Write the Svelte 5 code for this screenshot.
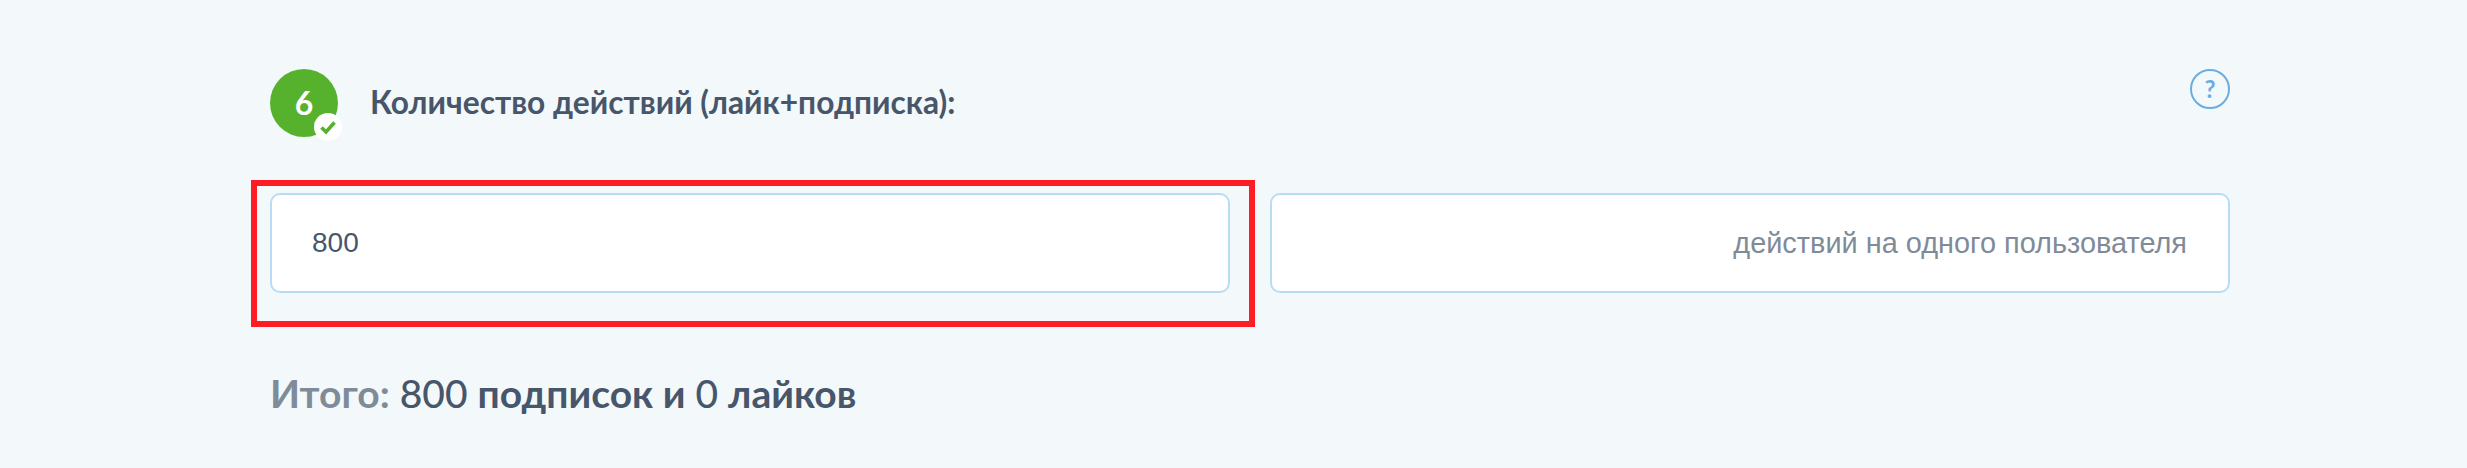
<script>
	let actions = 800;
	let likes = 0;
</script>

<div class="page">
	<div class="head">
		<div class="step">
			<span class="num">6</span>
			<span class="done">
				<svg viewBox="0 0 20 20" width="20" height="20"><path d="M3.5 10.5l4.5 4.5 8.5-9.5" fill="none" stroke="#56b22d" stroke-width="3.6" /></svg>
			</span>
		</div>
		<h2>Количество действий (лайк+подписка):</h2>
		<span class="help">?</span>
	</div>

	<div class="inputs">
		<div class="field first">
			<span class="value">{actions}</span>
			<span class="marker"></span>
		</div>
		<div class="field second">
			<span class="hint">действий на одного пользователя</span>
		</div>
	</div>

	<p class="total"><b class="muted">Итого:</b> <span class="n">{actions}</span> <b>подписок и</b> <span class="n">{likes}</span> <b>лайков</b></p>
</div>

<style>
	:global(body) {
		margin: 0;
		background: #f3f8fb;
	}

	.page {
		height: 468px;
		box-sizing: border-box;
		padding: 69px 237px 0 270px;
		font-family: Lato, 'Liberation Sans', sans-serif;
		color: #47566a;
	}

	.head {
		display: flex;
		align-items: flex-start;
		height: 68px;
	}

	.step {
		position: relative;
		width: 68px;
		height: 68px;
		flex: none;
		border-radius: 50%;
		background: #56b22d;
		display: flex;
		align-items: center;
		justify-content: center;
	}

	.num {
		color: #fff;
		font-size: 32px;
		font-weight: 700;
		line-height: 1;
	}

	.done {
		position: absolute;
		right: -4px;
		bottom: -4px;
		width: 28px;
		height: 28px;
		border-radius: 50%;
		background: #fff;
		display: flex;
		align-items: center;
		justify-content: center;
	}

	.done svg {
		display: block;
	}

	h2 {
		margin: 0 0 0 32px;
		font-size: 31.7px;
		line-height: 66px;
		font-weight: 700;
		flex: 1;
	}

	.help {
		width: 40px;
		height: 40px;
		box-sizing: border-box;
		flex: none;
		border: 2px solid #6cade0;
		border-radius: 50%;
		color: #6cade0;
		font-size: 24px;
		font-weight: 700;
		line-height: 35px;
		text-align: center;
	}

	.inputs {
		display: flex;
		gap: 40px;
		margin-top: 56px;
	}

	.field {
		position: relative;
		height: 100px;
		box-sizing: border-box;
		flex: 1;
		display: flex;
		align-items: center;
		background: #fff;
		border: 2px solid #b9dcf5;
		border-radius: 10px;
		font-family: 'Liberation Sans', Arial, sans-serif;
		font-size: 28px;
	}

	.first {
		padding-left: 40px;
	}

	.second {
		padding-right: 41px;
		justify-content: flex-end;
	}

	.hint {
		color: #7f8b99;
		font-size: 28.9px;
	}

	.marker {
		position: absolute;
		left: -21px;
		top: -15px;
		width: 1004px;
		height: 147px;
		box-sizing: border-box;
		border: 6px solid #ff1d25;
		pointer-events: none;
	}

	.total {
		margin: 78px 0 0;
		font-size: 39px;
		line-height: 44px;
	}

	.total b {
		font-weight: 700;
	}

	.total .muted {
		color: #7f8b99;
	}

	.n {
		font-weight: 500;
	}
</style>
